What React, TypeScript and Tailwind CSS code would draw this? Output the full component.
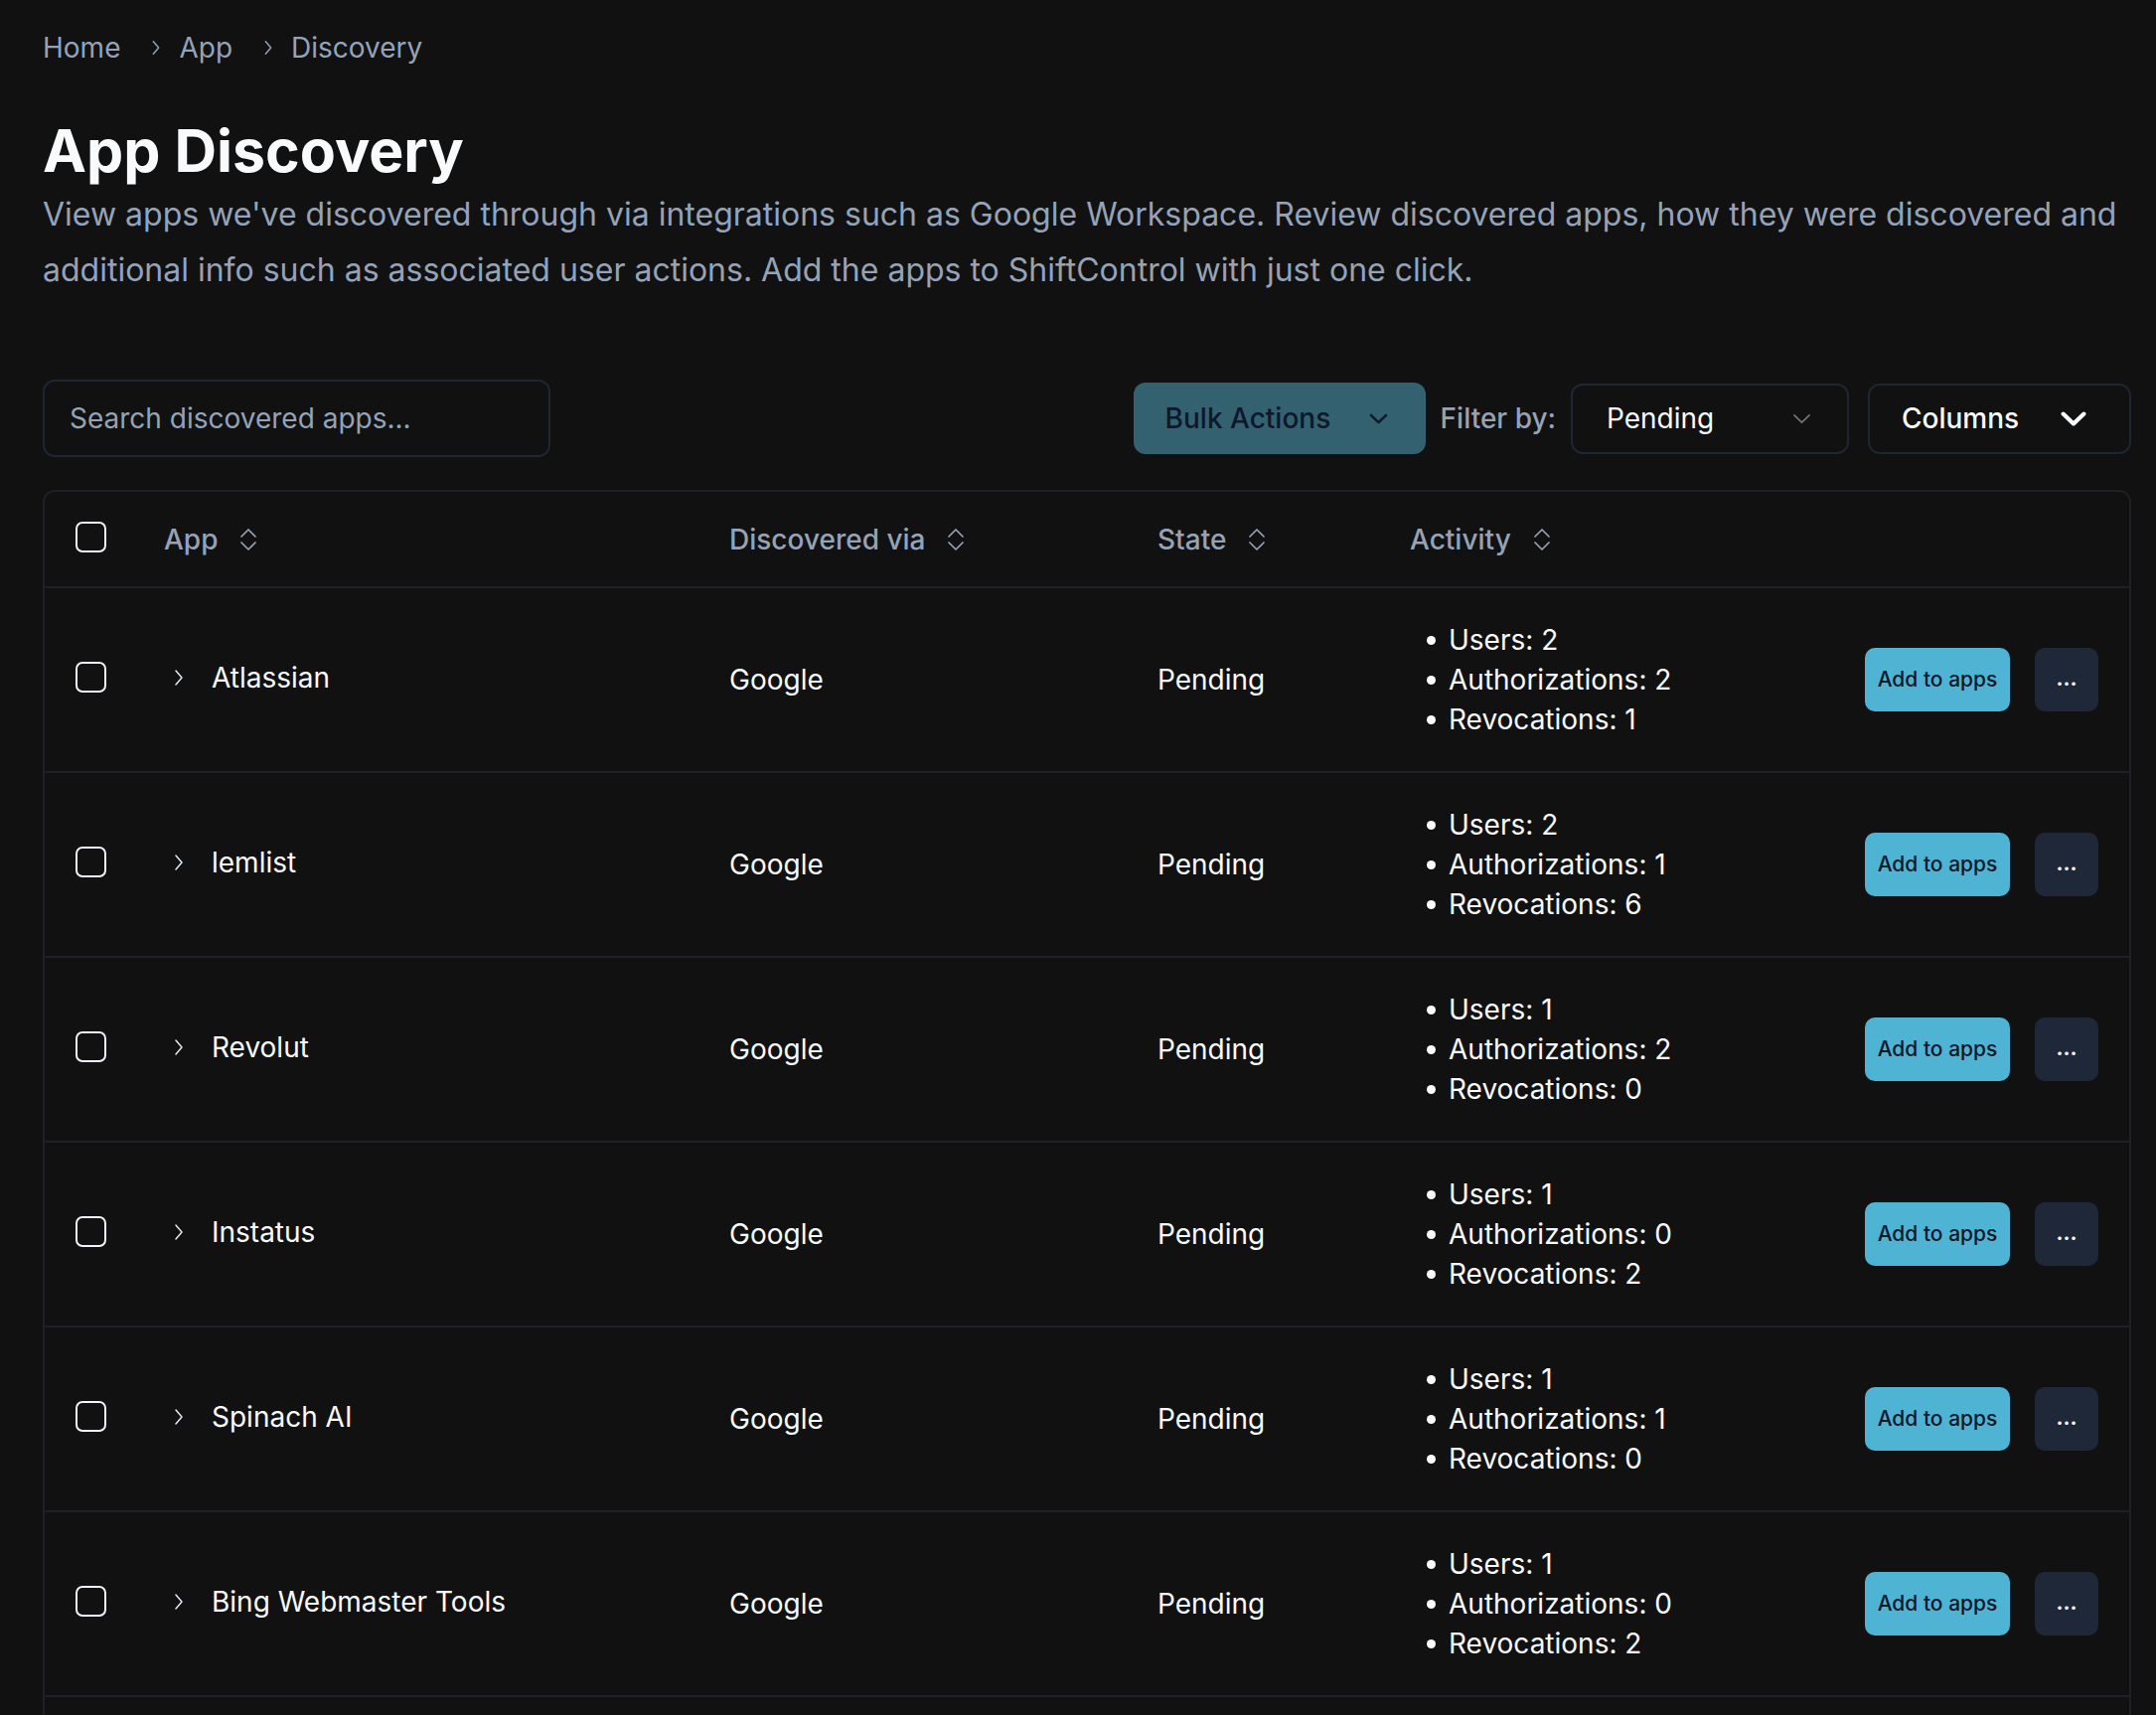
import React from 'react'

const ROWS = [
  { name: 'Atlassian', users: 2, auths: 2, revs: 1 },
  { name: 'lemlist', users: 2, auths: 1, revs: 6 },
  { name: 'Revolut', users: 1, auths: 2, revs: 0 },
  { name: 'Instatus', users: 1, auths: 0, revs: 2 },
  { name: 'Spinach AI', users: 1, auths: 1, revs: 0 },
  { name: 'Bing Webmaster Tools', users: 1, auths: 0, revs: 2 },
]

function SortIcon() {
  return (
    <svg width="18" height="26" viewBox="0 0 18 26" fill="none" stroke="currentColor" strokeWidth="1.7" strokeLinecap="round" strokeLinejoin="round">
      <polyline points="2,10 9,3 16,10" />
      <polyline points="2,16 9,23 16,16" />
    </svg>
  )
}

function ChevronRight({ w = 12, h = 20, sw = 1.6 }: { w?: number; h?: number; sw?: number }) {
  return (
    <svg width={w} height={h} viewBox="0 0 12 20" fill="none" stroke="currentColor" strokeWidth={sw} strokeLinecap="round" strokeLinejoin="round">
      <polyline points="3,3 9,10 3,17" />
    </svg>
  )
}

function ChevronDown({ w, h, sw }: { w: number; h: number; sw: number }) {
  return (
    <svg width={w} height={h} viewBox="0 0 20 12" fill="none" stroke="currentColor" strokeWidth={sw} strokeLinecap="round" strokeLinejoin="round" preserveAspectRatio="none">
      <polyline points="2,2 10,10 18,2" />
    </svg>
  )
}

function Checkbox() {
  return <div className="w-[31px] h-[31px] rounded-[7px] border-2 border-[#f1f5f9]" />
}

function HeaderCell({ label }: { label: string }) {
  return (
    <div className="flex items-center gap-[22px] text-[#94a3b8] font-medium">
      <span>{label}</span>
      <SortIcon />
    </div>
  )
}

export default function App() {
  return (
    <div className="min-h-screen bg-[#111111] font-['Inter',sans-serif] text-[28px] text-[#f8fafc] pl-[43px] pr-[25px] pt-[28px]">
      {/* breadcrumb */}
      <nav className="flex items-center leading-[40px] text-[#94a3b8]">
        <span>Home</span>
        <span className="ml-[30px] mr-[17px]"><ChevronRight w={12} h={18} sw={1.6} /></span>
        <span>App</span>
        <span className="ml-[30px] mr-[17px]"><ChevronRight w={12} h={18} sw={1.6} /></span>
        <span>Discovery</span>
      </nav>

      <h1 className="mt-[48px] text-[59px] leading-[72px] font-bold text-[#f8fafc]">App Discovery</h1>
      <p className="text-[32px] leading-[56px] text-[#94a3b8]">
        View apps we've discovered through via integrations such as Google Workspace. Review discovered apps, how they were discovered and additional info such as associated user actions. Add the apps to ShiftControl with just one click.
      </p>

      {/* toolbar */}
      <div className="mt-[82px] flex items-center justify-between h-[78px]">
        <div className="w-[511px] h-[78px] rounded-[12px] border-2 border-[#1e2533] flex items-center pl-[25px] text-[#94a3b8]">
          Search discovered apps...
        </div>
        <div className="flex items-center">
          <button className="h-[72px] w-[294px] rounded-[12px] bg-[#336170] text-[#0f172a] font-medium flex items-center pl-[32px] pr-[38px] justify-between">
            <span>Bulk Actions</span>
            <ChevronDown w={19} h={11} sw={2.6} />
          </button>
          <span className="ml-[15px] text-[#94a3b8] font-medium">Filter by:</span>
          <div className="ml-[15px] h-[71px] w-[280px] rounded-[12px] border-2 border-[#1e2533] flex items-center justify-between pl-[34px] pr-[36px]">
            <span className="text-[#f8fafc]">Pending</span>
            <span className="text-[#737373]"><ChevronDown w={19} h={11} sw={1.8} /></span>
          </div>
          <div className="ml-[19px] h-[71px] w-[265px] rounded-[12px] border-2 border-[#1e2533] flex items-center justify-between pl-[32px] pr-[43px]">
            <span className="font-medium text-[#f8fafc]">Columns</span>
            <span className="text-[#f8fafc]"><ChevronDown w={26} h={15} sw={3.2} /></span>
          </div>
        </div>
      </div>

      {/* table */}
      <div className="mt-[33px] rounded-t-[12px] border-2 border-b-0 border-[#1f1f25] overflow-hidden">
        <div className="grid grid-cols-[89px_569px_431px_254px_1fr_235px] items-center h-[95px] pl-[31px] pr-[31px]">
          <div className="pb-[4px]"><Checkbox /></div>
          <HeaderCell label="App" />
          <HeaderCell label="Discovered via" />
          <HeaderCell label="State" />
          <HeaderCell label="Activity" />
          <div />
        </div>
        {ROWS.map((r) => (
          <div key={r.name} className="grid grid-cols-[89px_569px_431px_254px_1fr_235px] items-center h-[186px] border-t-2 border-[#1f1f25] pl-[31px] pr-[31px]">
            <div className="pb-[6px]"><Checkbox /></div>
            <div className="flex items-center pl-[9px] pb-[4px]">
              <span className="text-[#e2e8f0]"><ChevronRight w={12} h={20} sw={1.5} /></span>
              <span className="ml-[27px]">{r.name}</span>
            </div>
            <div>Google</div>
            <div>Pending</div>
            <ul className="pl-[17px] leading-[40px]">
              {[`Users: ${r.users}`, `Authorizations: ${r.auths}`, `Revocations: ${r.revs}`].map((t) => (
                <li key={t} className="flex items-center">
                  <span className="w-[9px] h-[9px] rounded-full bg-[#f8fafc] mr-[13px]" />
                  <span>{t}</span>
                </li>
              ))}
            </ul>
            <div className="flex items-center justify-between">
              <button className="h-[64px] w-[146px] rounded-[10px] bg-[#4fb3d3] text-[#111827] text-[21px] font-medium">
                Add to apps
              </button>
              <button className="h-[64px] w-[64px] rounded-[10px] bg-[#1f2838] text-[#f8fafc] text-[21px] font-bold leading-none pb-[4px]">
                ...
              </button>
            </div>
          </div>
        ))}
        <div className="h-[60px] border-t-2 border-[#1f1f25]" />
      </div>
    </div>
  )
}
